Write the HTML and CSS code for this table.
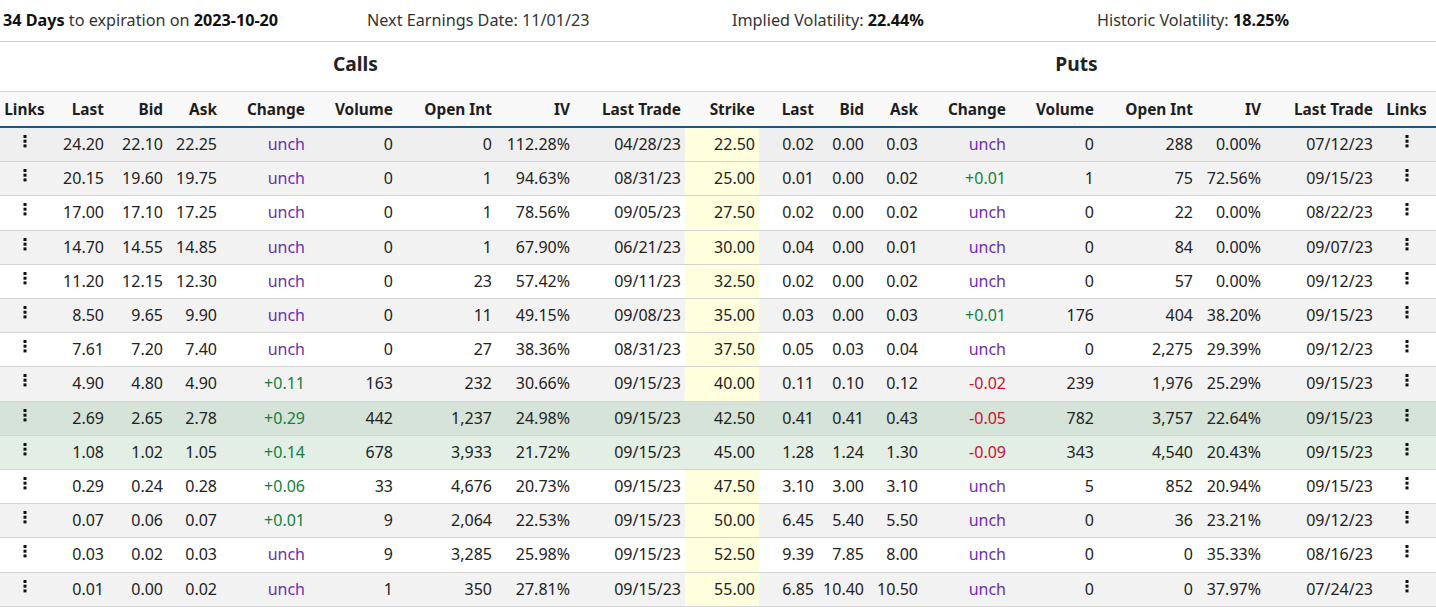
FILE: index.html
```html
<!DOCTYPE html>
<html>
<head>
<meta charset="utf-8">
<link rel="stylesheet" href="styles.css">
</head>
<body>
<div class="info">
  <div class="info-item"><b>34 Days</b> to expiration on <b>2023-10-20</b></div>
  <div class="info-item">Next Earnings Date: 11/01/23</div>
  <div class="info-item">Implied Volatility: <b>22.44%</b></div>
  <div class="info-item">Historic Volatility: <b>18.25%</b></div>
</div>
<div class="titles">
  <div class="title-calls">Calls</div>
  <div class="title-puts">Puts</div>
</div>
<table class="chain">
  <colgroup>
    <col style="width:49px"><col style="width:59px"><col style="width:59px"><col style="width:54px"><col style="width:88px"><col style="width:88px"><col style="width:99px"><col style="width:78px"><col style="width:111px"><col style="width:74px"><col style="width:59px"><col style="width:50px"><col style="width:54px"><col style="width:88px"><col style="width:88px"><col style="width:99px"><col style="width:68px"><col style="width:112px"><col style="width:59px">
  </colgroup>
  <thead>
    <tr>
      <th class="c">Links</th><th>Last</th><th>Bid</th><th>Ask</th><th>Change</th><th>Volume</th><th>Open Int</th><th>IV</th><th>Last Trade</th><th>Strike</th><th>Last</th><th>Bid</th><th>Ask</th><th>Change</th><th>Volume</th><th>Open Int</th><th>IV</th><th>Last Trade</th><th class="c">Links</th>
    </tr>
  </thead>
  <tbody>
    <tr class="hover">
      <td class="c"><svg class="kebab" width="4" height="13" viewBox="0 0 4 13"><rect x="0.5" y="0" width="3" height="3"/><rect x="0.5" y="4.7" width="3" height="3"/><rect x="0.5" y="9.4" width="3" height="3"/></svg></td>
      <td>24.20</td><td>22.10</td><td>22.25</td><td class="unch">unch</td><td>0</td><td>0</td><td>112.28%</td><td>04/28/23</td><td class="strike">22.50</td><td>0.02</td><td>0.00</td><td>0.03</td><td class="unch">unch</td><td>0</td><td>288</td><td>0.00%</td><td>07/12/23</td>
      <td class="c"><svg class="kebab" width="4" height="13" viewBox="0 0 4 13"><rect x="0.5" y="0" width="3" height="3"/><rect x="0.5" y="4.7" width="3" height="3"/><rect x="0.5" y="9.4" width="3" height="3"/></svg></td>
    </tr>
    <tr>
      <td class="c"><svg class="kebab" width="4" height="13" viewBox="0 0 4 13"><rect x="0.5" y="0" width="3" height="3"/><rect x="0.5" y="4.7" width="3" height="3"/><rect x="0.5" y="9.4" width="3" height="3"/></svg></td>
      <td>20.15</td><td>19.60</td><td>19.75</td><td class="unch">unch</td><td>0</td><td>1</td><td>94.63%</td><td>08/31/23</td><td class="strike">25.00</td><td>0.01</td><td>0.00</td><td>0.02</td><td class="up">+0.01</td><td>1</td><td>75</td><td>72.56%</td><td>09/15/23</td>
      <td class="c"><svg class="kebab" width="4" height="13" viewBox="0 0 4 13"><rect x="0.5" y="0" width="3" height="3"/><rect x="0.5" y="4.7" width="3" height="3"/><rect x="0.5" y="9.4" width="3" height="3"/></svg></td>
    </tr>
    <tr>
      <td class="c"><svg class="kebab" width="4" height="13" viewBox="0 0 4 13"><rect x="0.5" y="0" width="3" height="3"/><rect x="0.5" y="4.7" width="3" height="3"/><rect x="0.5" y="9.4" width="3" height="3"/></svg></td>
      <td>17.00</td><td>17.10</td><td>17.25</td><td class="unch">unch</td><td>0</td><td>1</td><td>78.56%</td><td>09/05/23</td><td class="strike">27.50</td><td>0.02</td><td>0.00</td><td>0.02</td><td class="unch">unch</td><td>0</td><td>22</td><td>0.00%</td><td>08/22/23</td>
      <td class="c"><svg class="kebab" width="4" height="13" viewBox="0 0 4 13"><rect x="0.5" y="0" width="3" height="3"/><rect x="0.5" y="4.7" width="3" height="3"/><rect x="0.5" y="9.4" width="3" height="3"/></svg></td>
    </tr>
    <tr>
      <td class="c"><svg class="kebab" width="4" height="13" viewBox="0 0 4 13"><rect x="0.5" y="0" width="3" height="3"/><rect x="0.5" y="4.7" width="3" height="3"/><rect x="0.5" y="9.4" width="3" height="3"/></svg></td>
      <td>14.70</td><td>14.55</td><td>14.85</td><td class="unch">unch</td><td>0</td><td>1</td><td>67.90%</td><td>06/21/23</td><td class="strike">30.00</td><td>0.04</td><td>0.00</td><td>0.01</td><td class="unch">unch</td><td>0</td><td>84</td><td>0.00%</td><td>09/07/23</td>
      <td class="c"><svg class="kebab" width="4" height="13" viewBox="0 0 4 13"><rect x="0.5" y="0" width="3" height="3"/><rect x="0.5" y="4.7" width="3" height="3"/><rect x="0.5" y="9.4" width="3" height="3"/></svg></td>
    </tr>
    <tr>
      <td class="c"><svg class="kebab" width="4" height="13" viewBox="0 0 4 13"><rect x="0.5" y="0" width="3" height="3"/><rect x="0.5" y="4.7" width="3" height="3"/><rect x="0.5" y="9.4" width="3" height="3"/></svg></td>
      <td>11.20</td><td>12.15</td><td>12.30</td><td class="unch">unch</td><td>0</td><td>23</td><td>57.42%</td><td>09/11/23</td><td class="strike">32.50</td><td>0.02</td><td>0.00</td><td>0.02</td><td class="unch">unch</td><td>0</td><td>57</td><td>0.00%</td><td>09/12/23</td>
      <td class="c"><svg class="kebab" width="4" height="13" viewBox="0 0 4 13"><rect x="0.5" y="0" width="3" height="3"/><rect x="0.5" y="4.7" width="3" height="3"/><rect x="0.5" y="9.4" width="3" height="3"/></svg></td>
    </tr>
    <tr>
      <td class="c"><svg class="kebab" width="4" height="13" viewBox="0 0 4 13"><rect x="0.5" y="0" width="3" height="3"/><rect x="0.5" y="4.7" width="3" height="3"/><rect x="0.5" y="9.4" width="3" height="3"/></svg></td>
      <td>8.50</td><td>9.65</td><td>9.90</td><td class="unch">unch</td><td>0</td><td>11</td><td>49.15%</td><td>09/08/23</td><td class="strike">35.00</td><td>0.03</td><td>0.00</td><td>0.03</td><td class="up">+0.01</td><td>176</td><td>404</td><td>38.20%</td><td>09/15/23</td>
      <td class="c"><svg class="kebab" width="4" height="13" viewBox="0 0 4 13"><rect x="0.5" y="0" width="3" height="3"/><rect x="0.5" y="4.7" width="3" height="3"/><rect x="0.5" y="9.4" width="3" height="3"/></svg></td>
    </tr>
    <tr>
      <td class="c"><svg class="kebab" width="4" height="13" viewBox="0 0 4 13"><rect x="0.5" y="0" width="3" height="3"/><rect x="0.5" y="4.7" width="3" height="3"/><rect x="0.5" y="9.4" width="3" height="3"/></svg></td>
      <td>7.61</td><td>7.20</td><td>7.40</td><td class="unch">unch</td><td>0</td><td>27</td><td>38.36%</td><td>08/31/23</td><td class="strike">37.50</td><td>0.05</td><td>0.03</td><td>0.04</td><td class="unch">unch</td><td>0</td><td>2,275</td><td>29.39%</td><td>09/12/23</td>
      <td class="c"><svg class="kebab" width="4" height="13" viewBox="0 0 4 13"><rect x="0.5" y="0" width="3" height="3"/><rect x="0.5" y="4.7" width="3" height="3"/><rect x="0.5" y="9.4" width="3" height="3"/></svg></td>
    </tr>
    <tr>
      <td class="c"><svg class="kebab" width="4" height="13" viewBox="0 0 4 13"><rect x="0.5" y="0" width="3" height="3"/><rect x="0.5" y="4.7" width="3" height="3"/><rect x="0.5" y="9.4" width="3" height="3"/></svg></td>
      <td>4.90</td><td>4.80</td><td>4.90</td><td class="up">+0.11</td><td>163</td><td>232</td><td>30.66%</td><td>09/15/23</td><td class="strike">40.00</td><td>0.11</td><td>0.10</td><td>0.12</td><td class="down">-0.02</td><td>239</td><td>1,976</td><td>25.29%</td><td>09/15/23</td>
      <td class="c"><svg class="kebab" width="4" height="13" viewBox="0 0 4 13"><rect x="0.5" y="0" width="3" height="3"/><rect x="0.5" y="4.7" width="3" height="3"/><rect x="0.5" y="9.4" width="3" height="3"/></svg></td>
    </tr>
    <tr class="near-a">
      <td class="c"><svg class="kebab" width="4" height="13" viewBox="0 0 4 13"><rect x="0.5" y="0" width="3" height="3"/><rect x="0.5" y="4.7" width="3" height="3"/><rect x="0.5" y="9.4" width="3" height="3"/></svg></td>
      <td>2.69</td><td>2.65</td><td>2.78</td><td class="up">+0.29</td><td>442</td><td>1,237</td><td>24.98%</td><td>09/15/23</td><td class="strike">42.50</td><td>0.41</td><td>0.41</td><td>0.43</td><td class="down">-0.05</td><td>782</td><td>3,757</td><td>22.64%</td><td>09/15/23</td>
      <td class="c"><svg class="kebab" width="4" height="13" viewBox="0 0 4 13"><rect x="0.5" y="0" width="3" height="3"/><rect x="0.5" y="4.7" width="3" height="3"/><rect x="0.5" y="9.4" width="3" height="3"/></svg></td>
    </tr>
    <tr class="near-b">
      <td class="c"><svg class="kebab" width="4" height="13" viewBox="0 0 4 13"><rect x="0.5" y="0" width="3" height="3"/><rect x="0.5" y="4.7" width="3" height="3"/><rect x="0.5" y="9.4" width="3" height="3"/></svg></td>
      <td>1.08</td><td>1.02</td><td>1.05</td><td class="up">+0.14</td><td>678</td><td>3,933</td><td>21.72%</td><td>09/15/23</td><td class="strike">45.00</td><td>1.28</td><td>1.24</td><td>1.30</td><td class="down">-0.09</td><td>343</td><td>4,540</td><td>20.43%</td><td>09/15/23</td>
      <td class="c"><svg class="kebab" width="4" height="13" viewBox="0 0 4 13"><rect x="0.5" y="0" width="3" height="3"/><rect x="0.5" y="4.7" width="3" height="3"/><rect x="0.5" y="9.4" width="3" height="3"/></svg></td>
    </tr>
    <tr>
      <td class="c"><svg class="kebab" width="4" height="13" viewBox="0 0 4 13"><rect x="0.5" y="0" width="3" height="3"/><rect x="0.5" y="4.7" width="3" height="3"/><rect x="0.5" y="9.4" width="3" height="3"/></svg></td>
      <td>0.29</td><td>0.24</td><td>0.28</td><td class="up">+0.06</td><td>33</td><td>4,676</td><td>20.73%</td><td>09/15/23</td><td class="strike">47.50</td><td>3.10</td><td>3.00</td><td>3.10</td><td class="unch">unch</td><td>5</td><td>852</td><td>20.94%</td><td>09/15/23</td>
      <td class="c"><svg class="kebab" width="4" height="13" viewBox="0 0 4 13"><rect x="0.5" y="0" width="3" height="3"/><rect x="0.5" y="4.7" width="3" height="3"/><rect x="0.5" y="9.4" width="3" height="3"/></svg></td>
    </tr>
    <tr>
      <td class="c"><svg class="kebab" width="4" height="13" viewBox="0 0 4 13"><rect x="0.5" y="0" width="3" height="3"/><rect x="0.5" y="4.7" width="3" height="3"/><rect x="0.5" y="9.4" width="3" height="3"/></svg></td>
      <td>0.07</td><td>0.06</td><td>0.07</td><td class="up">+0.01</td><td>9</td><td>2,064</td><td>22.53%</td><td>09/15/23</td><td class="strike">50.00</td><td>6.45</td><td>5.40</td><td>5.50</td><td class="unch">unch</td><td>0</td><td>36</td><td>23.21%</td><td>09/12/23</td>
      <td class="c"><svg class="kebab" width="4" height="13" viewBox="0 0 4 13"><rect x="0.5" y="0" width="3" height="3"/><rect x="0.5" y="4.7" width="3" height="3"/><rect x="0.5" y="9.4" width="3" height="3"/></svg></td>
    </tr>
    <tr>
      <td class="c"><svg class="kebab" width="4" height="13" viewBox="0 0 4 13"><rect x="0.5" y="0" width="3" height="3"/><rect x="0.5" y="4.7" width="3" height="3"/><rect x="0.5" y="9.4" width="3" height="3"/></svg></td>
      <td>0.03</td><td>0.02</td><td>0.03</td><td class="unch">unch</td><td>9</td><td>3,285</td><td>25.98%</td><td>09/15/23</td><td class="strike">52.50</td><td>9.39</td><td>7.85</td><td>8.00</td><td class="unch">unch</td><td>0</td><td>0</td><td>35.33%</td><td>08/16/23</td>
      <td class="c"><svg class="kebab" width="4" height="13" viewBox="0 0 4 13"><rect x="0.5" y="0" width="3" height="3"/><rect x="0.5" y="4.7" width="3" height="3"/><rect x="0.5" y="9.4" width="3" height="3"/></svg></td>
    </tr>
    <tr>
      <td class="c"><svg class="kebab" width="4" height="13" viewBox="0 0 4 13"><rect x="0.5" y="0" width="3" height="3"/><rect x="0.5" y="4.7" width="3" height="3"/><rect x="0.5" y="9.4" width="3" height="3"/></svg></td>
      <td>0.01</td><td>0.00</td><td>0.02</td><td class="unch">unch</td><td>1</td><td>350</td><td>27.81%</td><td>09/15/23</td><td class="strike">55.00</td><td>6.85</td><td>10.40</td><td>10.50</td><td class="unch">unch</td><td>0</td><td>0</td><td>37.97%</td><td>07/24/23</td>
      <td class="c"><svg class="kebab" width="4" height="13" viewBox="0 0 4 13"><rect x="0.5" y="0" width="3" height="3"/><rect x="0.5" y="4.7" width="3" height="3"/><rect x="0.5" y="9.4" width="3" height="3"/></svg></td>
    </tr>
  </tbody>
</table>
</body>
</html>
```

FILE: styles.css
```css
html, body {
  margin: 0;
  padding: 0;
  background: #ffffff;
}
body {
  font-family: "Noto Sans", "Open Sans", sans-serif;
  font-size: 16px;
  color: #222222;
  width: 1436px;
  overflow: hidden;
}
.info {
  display: grid;
  grid-template-columns: 364px 365px 365px auto;
  padding-left: 3px;
  height: 41px;
  line-height: 41px;
  font-size: 16.2px;
  border-bottom: 1px solid #cfcfcf;
  color: #333333;
  white-space: nowrap;
}
.info b {
  color: #111111;
  font-weight: 700;
}
.titles {
  display: flex;
  height: 49px;
  font-size: 19.2px;
  font-weight: 700;
  line-height: 43px;
  color: #222222;
}
.title-calls {
  width: 711px;
  text-align: center;
}
.title-puts {
  flex: 1;
  text-align: center;
  padding-left: 6px;
}
.chain {
  width: 1436px;
  table-layout: fixed;
  border-collapse: separate;
  border-spacing: 0;
}
.chain th {
  background: #f8f8f8;
  font-size: 15.4px;
  font-weight: 700;
  text-align: right;
  padding: 1px 4px 0 4px;
  height: 33px;
  line-height: 33px;
  border-top: 1px solid #d6d6d6;
  border-bottom: 2px solid #1d5681;
  white-space: nowrap;
  color: #1e1e1e;
}
.chain td {
  text-align: right;
  padding: 0 4px;
  line-height: 33.2px;
  height: 33.2px;
  border-bottom: 1px solid #d4d4d4;
  white-space: nowrap;
  color: #222222;
}
.chain .c {
  text-align: center;
}
.chain tbody tr:nth-child(even) td {
  background: #f2f2f2;
}
.chain tbody tr.hover td {
  background: #efefef;
}
.chain td.strike {
  background: #ffffdd;
}
.chain tbody tr:nth-child(even) td.strike,
.chain tbody tr.hover td.strike {
  background: #ffffdd;
}
.chain tbody tr.near-a td,
.chain tbody tr.near-a td.strike {
  background: #d5e3d9;
}
.chain tbody tr.near-b td,
.chain tbody tr.near-b td.strike {
  background: #e3efe5;
}
.chain td.unch {
  color: #6a2fb0;
}
.chain td.up {
  color: #12803f;
}
.chain td.down {
  color: #c8102e;
}
.kebab {
  fill: #111111;
  vertical-align: 2px;
}
```
